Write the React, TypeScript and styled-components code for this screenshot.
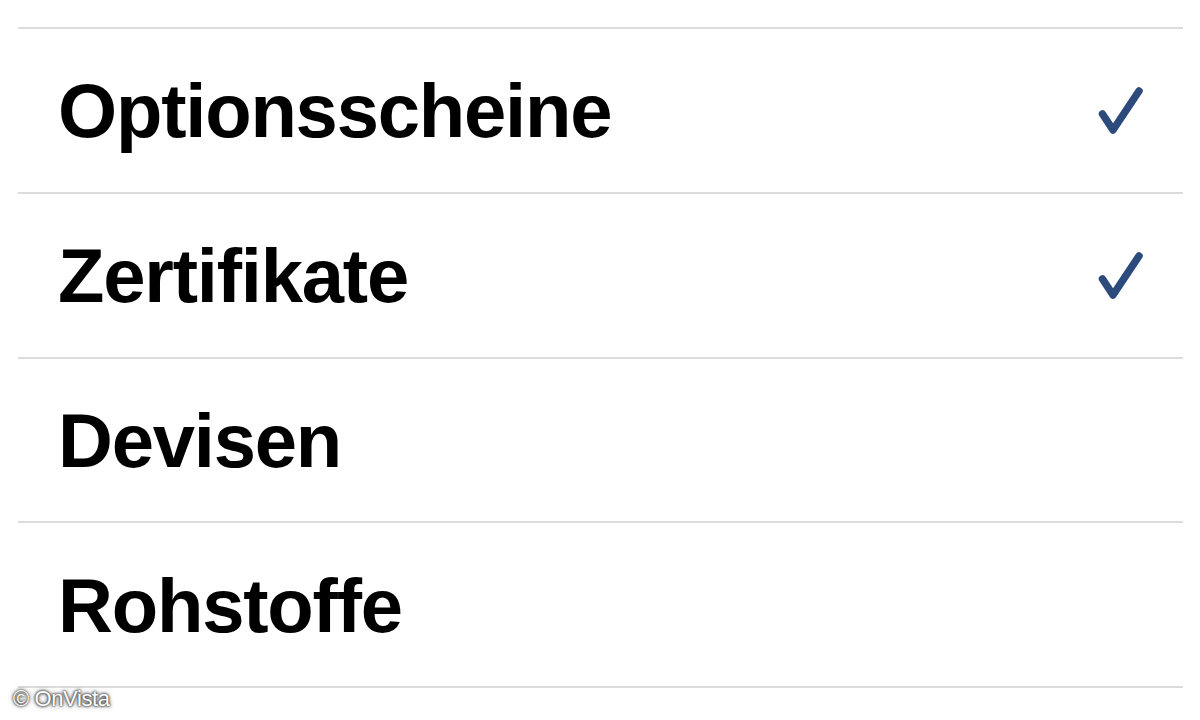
import React from "react";
import styled, { createGlobalStyle } from "styled-components";

const Global = createGlobalStyle`
  html, body { margin: 0; padding: 0; background: #ffffff; }
  body { width: 1200px; height: 720px; overflow: hidden; font-family: "Liberation Sans", Arial, sans-serif; }
`;

const Page = styled.div`
  position: relative;
  width: 1200px;
  height: 720px;
  background: #ffffff;
  padding-top: 27px;
  box-sizing: border-box;
`;

const List = styled.ul`
  list-style: none;
  margin: 0 0 0 18px;
  padding: 0;
  width: 1165px;
  border-top: 2px solid #dcdcdc;
`;

const Row = styled.li`
  display: flex;
  align-items: center;
  justify-content: space-between;
  height: 162.75px;
  padding: 0 38px 0 40px;
  border-bottom: 2px solid #dcdcdc;
`;

const Label = styled.span`
  font-family: "Liberation Sans", Arial, sans-serif;
  font-weight: 700;
  font-size: 76px;
  letter-spacing: -1.2px;
  font-variant-ligatures: none;
  font-feature-settings: "liga" 0, "clig" 0;
  color: #000000;
  line-height: 1;
  padding-top: 2px;
`;

const Check = styled.svg`
  width: 48px;
  height: 50px;
  flex: none;
`;

const Credit = styled.div`
  position: absolute;
  left: 13px;
  top: 686px;
  font-family: "Liberation Sans", Arial, sans-serif;
  font-size: 22px;
  color: #ffffff;
  letter-spacing: -0.4px;
  text-shadow: 0 0 2px #333, 0 0 3px #444, 0 0 5px #666;
`;

const items = [
  { label: "Optionsscheine", checked: true },
  { label: "Zertifikate", checked: true },
  { label: "Devisen", checked: false },
  { label: "Rohstoffe", checked: false },
];

const CheckIcon = () => (
  <Check viewBox="0 0 48 50">
    <path
      d="M5.5 29 L16 45 L42 6"
      fill="none"
      stroke="#2d4a7c"
      strokeWidth="7.5"
      strokeLinecap="round"
      strokeLinejoin="round"
    />
  </Check>
);

export default function App() {
  return (
    <>
      <Global />
      <Page>
        <List>
          {items.map((it) => (
            <Row key={it.label}>
              <Label>{it.label}</Label>
              {it.checked && <CheckIcon />}
            </Row>
          ))}
        </List>
        <Credit>© OnVista</Credit>
      </Page>
    </>
  );
}
